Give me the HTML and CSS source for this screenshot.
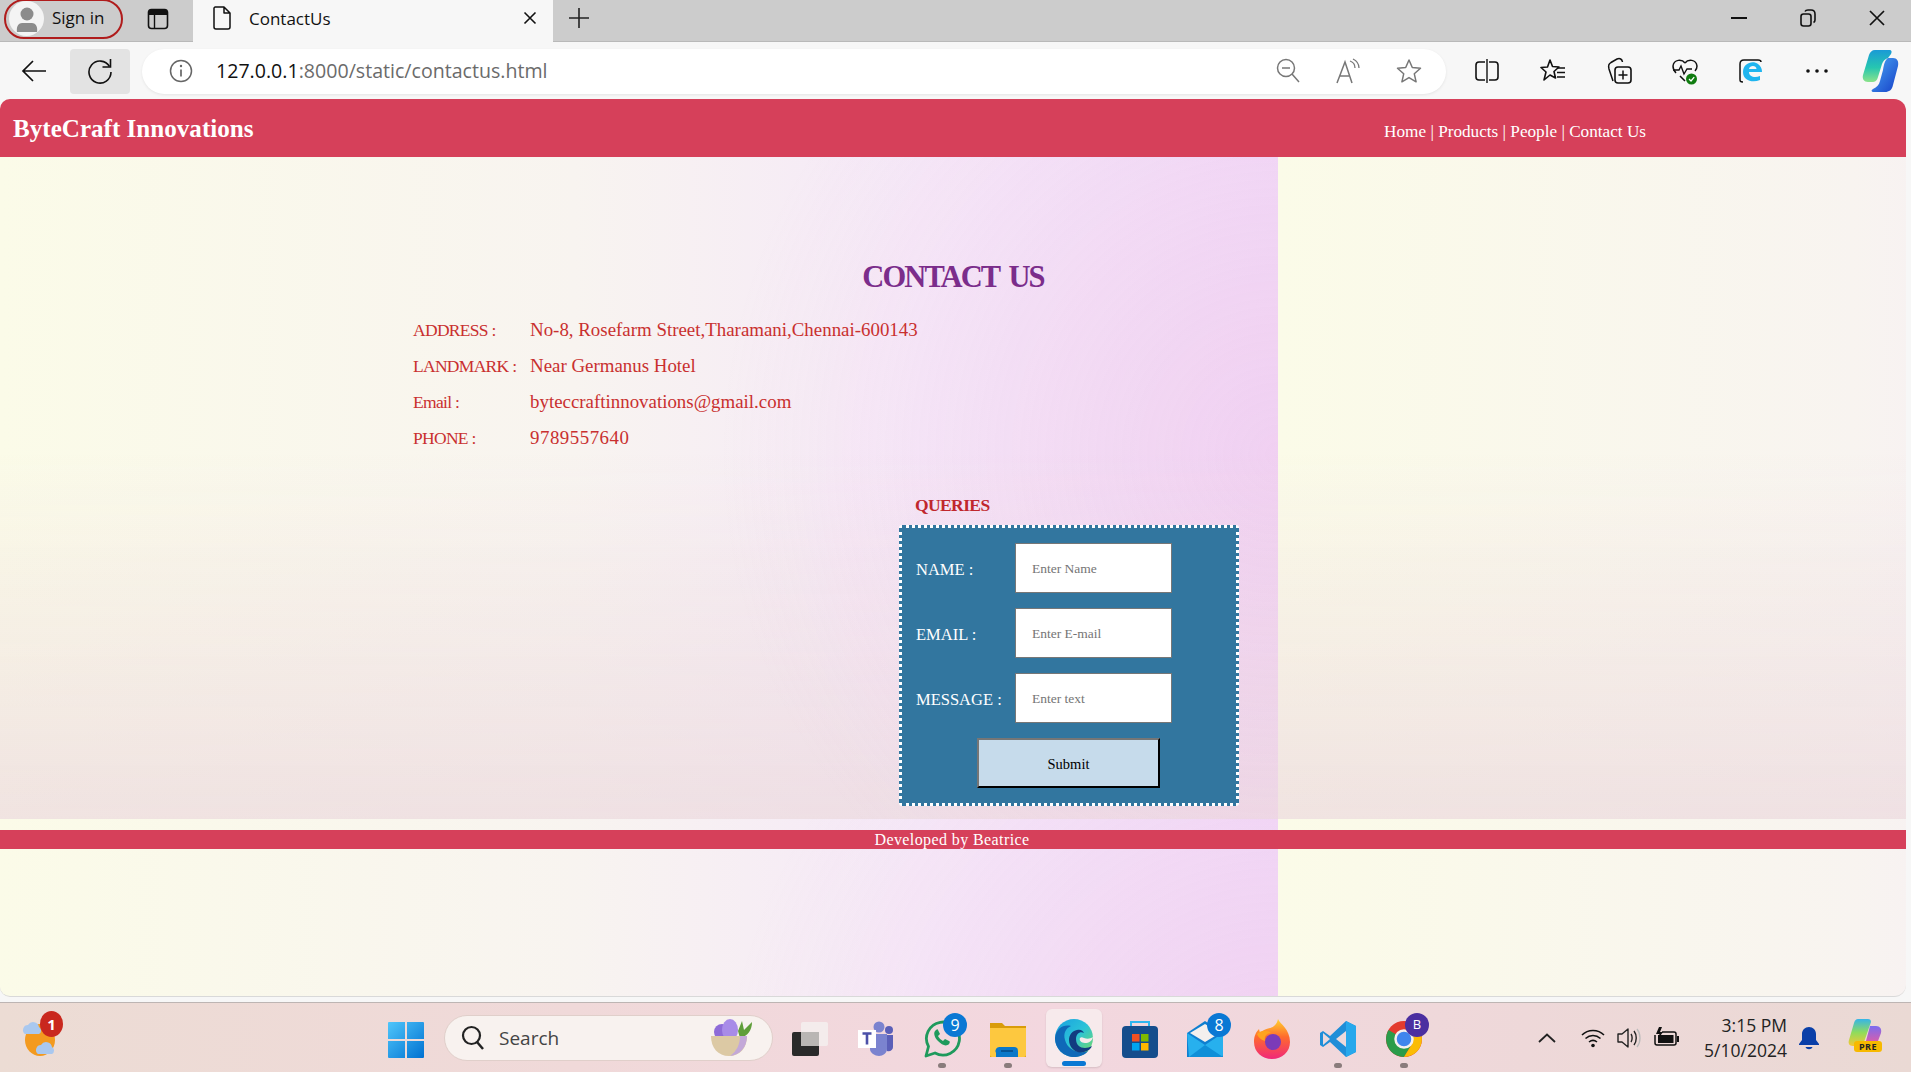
FILE: index.html
```html
<!DOCTYPE html>
<html lang="en">
<head>
<meta charset="utf-8">
<title>ContactUs</title>
<link rel="stylesheet" href="styles.css">
</head>
<body>
<div class="window">
  <div class="tabstrip">
    <div class="signin">
      <span class="avatar"><svg width="26" height="28" viewBox="0 0 26 28"><circle cx="13" cy="9" r="6.5" fill="#8c8c8c"/><path d="M3 27c-1-6 2-9 5-9h10c3 0 6 3 5 9z" fill="#8c8c8c"/></svg></span>
      <span class="signin-text">Sign in</span>
    </div>
    <div class="tabs-icon"><svg width="22" height="22" viewBox="0 0 22 22"><rect x="1.5" y="1.5" width="19" height="19" rx="3" fill="none" stroke="#111" stroke-width="1.6"/><path d="M2 2h18v5H2z" fill="#111"/><path d="M7.5 7v13" stroke="#111" stroke-width="1.4"/></svg></div>
    <div class="tab">
      <svg class="doc" width="18" height="24" viewBox="0 0 18 24"><path d="M2 1h9l6 6v14a2 2 0 0 1-2 2H3a2 2 0 0 1-2-2V2zM11 1v6h6" fill="none" stroke="#111" stroke-width="1.5" stroke-linejoin="round"/></svg>
      <span class="tab-title">ContactUs</span>
      <svg width="14" height="14" viewBox="0 0 14 14"><path d="M1.5 1.5l11 11M12.5 1.5l-11 11" stroke="#111" stroke-width="1.6"/></svg>
    </div>
    <div class="newtab"><svg width="22" height="22" viewBox="0 0 22 22"><path d="M11 1v20M1 11h20" stroke="#222" stroke-width="1.6"/></svg></div>
    <div class="winctl">
      <span><svg width="18" height="4" viewBox="0 0 18 4"><path d="M1 2h16" stroke="#111" stroke-width="2"/></svg></span>
      <span><svg width="16" height="18" viewBox="0 0 16 18"><rect x="1" y="5" width="10" height="12" rx="2.5" fill="none" stroke="#111" stroke-width="1.6"/><path d="M5 2.5C5.500 1.500 6.500 1 8 1h3c2.500 0 4 1.500 4 4v6c0 1-.5 2-1.500 2.500" fill="none" stroke="#111" stroke-width="1.6"/></svg></span>
      <span><svg width="16" height="16" viewBox="0 0 16 16"><path d="M1 1l14 14M15 1L1 15" stroke="#111" stroke-width="1.7"/></svg></span>
    </div>
  </div>

  <div class="toolbar">
    <div class="nav-btn"><svg width="26" height="24" viewBox="0 0 26 24"><path d="M25 12H2M12 2L2 12l10 10" fill="none" stroke="#111" stroke-width="1.7"/></svg></div>
    <div class="nav-btn nav-btn-active"><svg width="26" height="28" viewBox="0 0 26 28"><path d="M22.500 9.500A11 11 0 1 0 24 15" fill="none" stroke="#111" stroke-width="1.6"/><path d="M23.500 2v8h-8" fill="none" stroke="#111" stroke-width="1.6"/></svg></div>
    <div class="addressbar">
      <svg width="24" height="24" viewBox="0 0 24 24"><circle cx="12" cy="12" r="10.500" fill="none" stroke="#666" stroke-width="1.5"/><path d="M12 10.500v7" stroke="#666" stroke-width="1.700"/><circle cx="12" cy="7" r="1.200" fill="#666"/></svg>
      <div class="url"><span class="host">127.0.0.1</span>:8000/static/contactus.html</div>
      <div class="addr-tools">
        <svg width="24" height="26" viewBox="0 0 24 26"><circle cx="10" cy="10" r="8.500" fill="none" stroke="#777" stroke-width="1.500"/><path d="M6 10h8M16 16l7 8" stroke="#777" stroke-width="1.500"/></svg>
        <svg width="26" height="26" viewBox="0 0 26 26"><path d="M2 25L10 4l7 21M5 18h10" fill="none" stroke="#777" stroke-width="1.500"/><path d="M15 3c3 1 5 4 5 7M18 1c4 2 6 5 6 9" fill="none" stroke="#777" stroke-width="1.300"/></svg>
        <svg width="26" height="26" viewBox="0 0 26 26"><path d="M13 2l3.300 7.500 8.200.8-6.200 5.500 1.800 8L13 19.600 5.900 23.800l1.800-8L1.500 10.300l8.200-.8z" fill="none" stroke="#777" stroke-width="1.500" stroke-linejoin="round"/></svg>
      </div>
    </div>
    <div class="tools">
      <span><svg width="24" height="26" viewBox="0 0 24 26"><rect x="1" y="4" width="22" height="18" rx="3" fill="none" stroke="#111" stroke-width="1.600"/><path d="M12 1v24" stroke="#f7f7f7" stroke-width="4"/><path d="M12 1v24" stroke="#111" stroke-width="1.400"/></svg></span>
      <span><svg width="26" height="26" viewBox="0 0 26 26"><path d="M10 2l2.500 6.500 6.500.5-5 4.500 1.500 6.500L10 17l-6 5 2-8-5-4.500L7.500 9z" fill="none" stroke="#111" stroke-width="1.600" stroke-linejoin="round"/><path d="M17 10h8M17 14.500h8M17 19h8" stroke="#111" stroke-width="1.500"/></svg></span>
      <span><svg width="26" height="28" viewBox="0 0 26 28"><path d="M7 24L3 12C2 8 3 7 5 5.500L11 2c3-1 5 0 5.500 3" fill="none" stroke="#111" stroke-width="1.500"/><rect x="9" y="10" width="16" height="16" rx="3" fill="#f7f7f7" stroke="#111" stroke-width="1.600"/><path d="M17 13.500v9M12.500 18h9" stroke="#111" stroke-width="1.500"/></svg></span>
      <span><svg width="26" height="28" viewBox="0 0 26 28"><path d="M13 6c-3-4-11-4-12 3 0 3 1 5 3 7M13 6c3-4 11-4 12 3 0 2-1 4-2 5M8 19l5 5" fill="none" stroke="#111" stroke-width="1.500"/><path d="M1 13h6l2-4 3 8 3-5h5" fill="none" stroke="#111" stroke-width="1.400"/><circle cx="19.500" cy="22" r="5.500" fill="#107c10"/><path d="M17 22l2 2 3.200-3.800" fill="none" stroke="#fff" stroke-width="1.300"/></svg></span>
      <span><svg width="26" height="28" viewBox="0 0 26 28"><path d="M5 25c-3 0-3-1-3-3V7c0-3 1-4 4-4h14c2 0 3 1 3 2" fill="none" stroke="#111" stroke-width="1.500"/><path d="M24 15H11c0 5 6 6 11 4v4c-7 3-17 1-17-8 0-9 10-12 15-8 3 2 4 5 4 8zM18.500 12c0-4-7-4-7.500 0z" fill="#1fb5ef" fill-rule="evenodd"/></svg></span>
      <span><svg width="24" height="6" viewBox="0 0 24 6"><circle cx="3" cy="3" r="1.800" fill="#111"/><circle cx="12" cy="3" r="1.800" fill="#111"/><circle cx="21" cy="3" r="1.800" fill="#111"/></svg></span>
      <span><svg width="37" height="43" viewBox="0 0 37 43"><defs><linearGradient id="cpa" x1="0" y1="0" x2="0" y2="1"><stop offset="0" stop-color="#1a9ad6"/><stop offset=".55" stop-color="#26c6b0"/><stop offset="1" stop-color="#8be38a"/></linearGradient><linearGradient id="cpb" x1="0" y1="0" x2="1" y2="1"><stop offset="0" stop-color="#4aa8f5"/><stop offset="1" stop-color="#1640c8"/></linearGradient></defs><path d="M13 1h14c3 0 3 2 2 4l-3 4c-3 1-5 3-6 6l-4 13c-1 4-3 5-6 5H6c-4 0-6-3-5-7L7 6c1-3 3-5 6-5z" fill="url(#cpa)"/><path d="M26 9h5c4 0 6 3 5 8l-5 19c-1 5-4 7-8 7H12c-3 0-3-2-1-3 4-2 6-4 7-8l3-11c1-6 2-10 5-12z" fill="url(#cpb)"/></svg></span>
    </div>
  </div>

  <div class="page">
    <header class="site-header">
      <div class="brand">ByteCraft Innovations</div>
      <nav class="site-nav">Home | Products | People | Contact Us</nav>
    </header>
    <main class="main">
      <h1 class="title">CONTACT US</h1>
      <table class="info">
        <tr><td class="info-key">ADDRESS :</td><td>No-8, Rosefarm Street,Tharamani,Chennai-600143</td></tr>
        <tr><td class="info-key">LANDMARK :</td><td>Near Germanus Hotel</td></tr>
        <tr><td class="info-key">Email :</td><td>byteccraftinnovations@gmail.com</td></tr>
        <tr><td class="info-key">PHONE :</td><td class="info-digits">9789557640</td></tr>
      </table>
      <section class="queries">
        <h2 class="queries-title">QUERIES</h2>
        <form class="query-form">
          <div class="field"><label class="field-label">NAME :</label><input class="field-input" placeholder="Enter Name"></div>
          <div class="field"><label class="field-label">EMAIL :</label><input class="field-input" placeholder="Enter E-mail"></div>
          <div class="field"><label class="field-label">MESSAGE :</label><input class="field-input" placeholder="Enter text"></div>
          <button class="submit" type="button">Submit</button>
        </form>
      </section>
    </main>
    <footer class="site-footer">Developed by Beatrice</footer>
  </div>

  <div class="taskbar">
    <div class="weather">
      <svg width="44" height="44" viewBox="0 0 44 44"><ellipse cx="18" cy="26" rx="15" ry="16" fill="#f39a1f"/><path d="M3 20a5 5 0 0 1 3-9 6 6 0 0 1 11 2 4 4 0 0 1 0 7z" fill="#a9c8ef"/><path d="M16 40a5 5 0 0 1 3-9 6 6 0 0 1 11 2 4 4 0 0 1 0 7z" fill="#a9c8ef"/></svg>
      <span class="badge badge-red">1</span>
    </div>
    <div class="task-center">
      <div class="start"><svg width="36" height="36" viewBox="0 0 36 36"><defs><linearGradient id="win" x1="0" y1="0" x2="1" y2="1"><stop offset="0" stop-color="#4fc6fb"/><stop offset="1" stop-color="#0071d1"/></linearGradient></defs><path d="M0 1a1 1 0 0 1 1-1h16v17H0zM19 0h16a1 1 0 0 1 1 1v16H19zM0 19h17v17H1a1 1 0 0 1-1-1zM19 19h17v16a1 1 0 0 1-1 1H19z" fill="url(#win)"/></svg></div>
      <div class="search">
        <svg width="24" height="26" viewBox="0 0 24 26"><circle cx="10.500" cy="10.500" r="8.500" fill="none" stroke="#222" stroke-width="2.200"/><path d="M16 17l6 7" stroke="#222" stroke-width="2.500"/></svg>
        <span class="search-text">Search</span>
        <svg class="bowl" width="46" height="38" viewBox="0 0 46 38"><path d="M30 12l4-10 2 9 8-8c0 8-4 14-12 16z" fill="#5f9e3a"/><ellipse cx="14" cy="13" rx="8" ry="8" fill="#8e6bd8"/><ellipse cx="22" cy="11" rx="8" ry="11" fill="#a88be8"/><path d="M3 17h36c0 12-7 20-18 20S3 29 3 17z" fill="#dcc9a4"/><path d="M22 37c10-1 17-9 17-20h-7c0 8-3 15-10 20z" fill="#c3a8d8"/></svg>
      </div>
      <div class="apps">
        <div class="app"><svg width="36" height="36" viewBox="0 0 36 36"><rect x="0" y="11" width="27" height="24" rx="2" fill="#2a2a2a"/><rect x="9" y="1" width="27" height="24" rx="2" fill="#f4f0ee" opacity=".85"/><rect x="9" y="11" width="18" height="14" fill="#b9b6b4"/></svg></div>
        <div class="app"><svg width="36" height="36" viewBox="0 0 36 36"><circle cx="21" cy="6" r="5.500" fill="#7b83cf"/><circle cx="31" cy="9" r="4" fill="#5b5fb8"/><path d="M26 14h9v12c0 3-3 5-6 4z" fill="#5b5fb8"/><path d="M12 13h17v15c0 4-4 7-8 7s-9-3-9-7z" fill="#7b83cf"/><rect x="0" y="9" width="18" height="18" fill="#fff"/><path d="M4.500 12.500h9M9 12.500v11" stroke="#4b50a8" stroke-width="2.600"/></svg></div>
        <div class="app app-open"><svg width="38" height="38" viewBox="0 0 38 38"><path d="M3 36l2.500-9.500A16.500 16.500 0 1 1 12 33z" fill="none" stroke="#1f9a5c" stroke-width="2.800" stroke-linejoin="round"/><path d="M13 10c-3 2-2 7 2 11s8 6 11 3c1-1 1-3 0-3l-4-2-2 2c-2-1-4-3-5-5l2-2-2-4c0-1-1-1-2 0z" fill="#1f9a5c"/></svg><span class="badge badge-blue">9</span></div>
        <div class="app app-open"><svg width="36" height="36" viewBox="0 0 36 36"><path d="M0 2h12l3 3h21v31H0z" fill="#d99c0a"/><path d="M0 7h36v27a2 2 0 0 1-2 2H2a2 2 0 0 1-2-2z" fill="#fdc83f"/><path d="M6 32a4 4 0 0 1 4-6h14a4 4 0 0 1 4 4v6H6z" fill="#0a78c9"/><path d="M11 30h12" stroke="#054a85" stroke-width="1.500"/></svg></div>
        <div class="app app-active"><svg width="38" height="38" viewBox="0 0 38 38"><defs><linearGradient id="edg" x1="0" y1="0" x2="1" y2="1"><stop offset="0" stop-color="#1aa0e0"/><stop offset=".5" stop-color="#2bc3d8"/><stop offset="1" stop-color="#7fdc5a"/></linearGradient></defs><circle cx="19" cy="19" r="19" fill="url(#edg)"/><path d="M0 19C1 9 9 5 16 7c-5 2-8 7-6 14 2 8 10 13 20 12 1 0 2-1 3-1-3 4-9 6-14 6C9 38 0 30 0 19z" fill="#0f69b8"/><path d="M29 33c-8 2-15-4-15-12 0-5 3-9 8-10 4-1 6 1 7 3-4-2-8 1-8 6 0 6 4 9 9 9 2 0 5-1 7-2-1 3-4 5-8 6z" fill="#123c80"/><path d="M38 18c-1 4-4 6-8 6s-6-3-5-5c1-1 2-1 4 0 3 1 6 1 9-1z" fill="#f7eaec"/></svg></div>
        <div class="app"><svg width="36" height="38" viewBox="0 0 36 38"><path d="M9 8V2h18v6" fill="none" stroke="#2fb5ef" stroke-width="2"/><rect x="0" y="6" width="36" height="32" rx="4" fill="#154d8c"/><rect x="10" y="14" width="7.500" height="7.500" fill="#f25022"/><rect x="19" y="14" width="7.500" height="7.500" fill="#7fba00"/><rect x="10" y="23" width="7.500" height="7.500" fill="#00a4ef"/><rect x="19" y="23" width="7.500" height="7.500" fill="#ffb900"/></svg></div>
        <div class="app"><svg width="38" height="36" viewBox="0 0 38 36"><path d="M0 12L18 0l18 12v24H0z" fill="#0f7fd0"/><path d="M3 12L18 3l15 9-15 9z" fill="#f4f0ee"/><path d="M0 12l18 12 18-12v22a2 2 0 0 1-2 2H2z" fill="#27b0ee"/><path d="M2 36l16-12 18 12z" fill="#0f8fd8"/></svg><span class="badge badge-blue">8</span></div>
        <div class="app"><svg width="36" height="40" viewBox="0 0 36 40"><defs><linearGradient id="ffx" x1="0" y1="0" x2="0" y2="1"><stop offset="0" stop-color="#ffd42e"/><stop offset=".45" stop-color="#ff6a2d"/><stop offset="1" stop-color="#f0287a"/></linearGradient></defs><path d="M24 0c2 5 12 10 12 23 0 10-8 17-18 17S0 33 0 23c0-6 2-10 5-13l1 4c3-3 6-4 10-5 4-1 7-4 8-9z" fill="url(#ffx)"/><circle cx="19" cy="23" r="8" fill="#7b3bb8"/><path d="M3 15c4-4 11-4 14-1-4 0-7 3-6 8-4-1-7-4-8-7z" fill="#ffa31f"/></svg></div>
        <div class="app app-open"><svg width="36" height="36" viewBox="0 0 36 36"><path d="M26 0l10 5v26l-10 5-16-15-7 5-3-2v-12l3-2 7 5z" fill="#1f8ed8"/><path d="M26 0l10 5v26l-10 5z" fill="#27a8ec"/><path d="M26 10l-10 8 10 8z" fill="#ecd9dc"/><path d="M3 12l7 6-7 6z" fill="#ecd9dc"/></svg></div>
        <div class="app app-open"><svg width="36" height="36" viewBox="0 0 36 36"><circle cx="18" cy="18" r="18" fill="#e33b2e"/><path d="M18 18L2.500 9A18 18 0 0 0 18 36l8-13z" fill="#2a9c4a"/><path d="M18 9h15.500A18 18 0 0 1 18 36l8-13z" fill="#fbbc05"/><circle cx="18" cy="18" r="8.500" fill="#3f86ee" stroke="#f5f0ee" stroke-width="2.500"/></svg><span class="badge badge-purple">B</span></div>
      </div>
    </div>
    <div class="tray">
      <svg class="tray-chevron" width="18" height="10" viewBox="0 0 18 10"><path d="M1 9l8-7.500L17 9" fill="none" stroke="#222" stroke-width="1.800"/></svg>
      <svg width="24" height="20" viewBox="0 0 24 20"><path d="M1 7c6-6 16-6 22 0M4.500 10.500c4.500-4 10.500-4 15 0M8 14c2.500-2 5.500-2 8 0" fill="none" stroke="#111" stroke-width="1.600"/><circle cx="12" cy="17.500" r="1.800" fill="#111"/></svg>
      <svg width="24" height="22" viewBox="0 0 24 22"><path d="M1 7h4l6-5v18l-6-5H1z" fill="none" stroke="#222" stroke-width="1.400" stroke-linejoin="round"/><path d="M14 7c1.500 2 1.500 6 0 8M17 4c3 4 3 10 0 14" fill="none" stroke="#222" stroke-width="1.400"/><path d="M20 2c4 5 4 13 0 18" fill="none" stroke="#bbb" stroke-width="1.300"/></svg>
      <svg width="26" height="22" viewBox="0 0 26 22"><path d="M2 8v8a2 2 0 0 0 2 2h17a2 2 0 0 0 2-2V7a2 2 0 0 0-2-2H9" fill="none" stroke="#111" stroke-width="1.500"/><rect x="5" y="8" width="15.500" height="8" fill="#111"/><rect x="24" y="9" width="2" height="6" fill="#111"/><path d="M6 0L3 7h3.500L5 12l5-7H7l2-5z" fill="#111"/></svg>
      <div class="clock"><div>3:15 PM</div><div>5/10/2024</div></div>
      <svg class="bell" width="20" height="24" viewBox="0 0 20 24"><path d="M10 1c-4 0-7 3-7 7v6l-3 4v1h20v-1l-3-4V8c0-4-3-7-7-7z" fill="#0a3fa8"/><path d="M6.500 21h7c-1 3-6 3-7 0z" fill="#0a3fa8"/></svg>
      <div class="copilot-pre">
        <svg width="34" height="28" viewBox="0 0 34 28"><defs><linearGradient id="cpp" x1="0" y1="0" x2="0" y2="1"><stop offset="0" stop-color="#36b5e8"/><stop offset=".5" stop-color="#8fdc5c"/><stop offset="1" stop-color="#f7c733"/></linearGradient><linearGradient id="cpq" x1="0" y1="0" x2="0" y2="1"><stop offset="0" stop-color="#7a6cf0"/><stop offset="1" stop-color="#f05a9a"/></linearGradient></defs><path d="M10 0h10c2 0 3 1 3 3l-7 20c-1 3-3 4-5 4H5c-4 0-5-3-4-6L6 4c1-3 2-4 4-4z" fill="url(#cpp)"/><path d="M22 7h6c4 0 6 3 5 7l-3 8c-1 3-3 5-6 5H13c3-1 4-3 5-5z" fill="url(#cpq)"/></svg>
        <span class="pre-tag">PRE</span>
      </div>
    </div>
  </div>
</div>
</body>
</html>
```
FILE: styles.css
```css
* { box-sizing: border-box; }
html, body { margin: 0; height: 100%; overflow: hidden; }
body { font-family: "Open Sans", "Noto Sans", sans-serif; color: #111; }
.window { display: flex; flex-direction: column; height: 1072px; background: #f7f7f7; }

/* tab strip */
.tabstrip { display: flex; align-items: center; height: 42px; background: #cccccc; border-bottom: 1px solid #b9b9b9; padding-left: 4px; flex: none; }
.signin { display: flex; align-items: center; gap: 8px; width: 119px; height: 40px; margin-top: -4px; padding-left: 3px; border: 2px solid #b01c1c; border-radius: 20px; font-size: 17px; }
.signin-text { padding-bottom: 2px; }
.avatar { display: flex; align-items: center; justify-content: center; width: 35px; height: 35px; border-radius: 50%; background: #f4f4f4; flex: none; overflow: hidden; }
.tabs-icon { display: flex; justify-content: center; width: 70px; margin-top: -3px; }
.tab { display: flex; align-items: center; width: 360px; height: 42px; padding: 0 16px 5px 20px; background: #f7f7f7; }
.tab-title { flex: 1; margin-left: 18px; font-size: 17px; }
.newtab { display: flex; justify-content: center; width: 52px; margin-top: -5px; }
.winctl { display: flex; margin-left: auto; }
.winctl span { display: flex; align-items: center; justify-content: center; width: 69px; height: 36px; margin-top: -6px; }

/* toolbar */
.toolbar { display: flex; align-items: center; height: 57px; padding: 0 0 0 4px; flex: none; }
.nav-btn { display: flex; align-items: center; justify-content: center; width: 60px; height: 45px; margin-top: 1px; border-radius: 4px; }
.nav-btn-active { background: #e3e3e3; margin-left: 6px; }
.addressbar { display: flex; align-items: center; width: 1304px; height: 45px; margin: 1px 0 0 12px; padding: 0 24px 0 27px; background: #fff; border-radius: 23px; box-shadow: 0 1px 3px rgba(0,0,0,.08); }
.url { flex: 1; margin: -2px 0 0 23px; font-size: 19.600px; color: #6b6b6b; white-space: nowrap; }
.host { color: #111; }
.addr-tools { display: flex; align-items: center; gap: 35px; }
.tools { display: flex; align-items: center; padding-left: 8px; }
.tools span { display: flex; align-items: center; justify-content: center; width: 66px; }
.tools span:last-child { width: 60px; }

/* page */
.page { height: 898px; margin-right: 5px; border-radius: 10px 12px 12px 10px; overflow: hidden; flex: none; border-bottom: 1px solid #d9d9d9;
  background-color: #fbf7ef;
  background-image:
    radial-gradient(circle at 100% 45%, rgba(238,180,222,.26), rgba(238,180,222,0) 42%),
    linear-gradient(180deg, rgba(236,218,222,0) 45%, rgba(236,218,222,.72) 100%),
    linear-gradient(90deg, #fbfbe8 0%, #f8f4f0 45%, #f5e8f8 72%, #f1daf8 100%);
  background-size: 1278px 663px;
  background-position: 0 57px;
}
.site-header { display: flex; justify-content: space-between; height: 58px; background: #d6405a; color: #fff; font-family: "Liberation Serif", serif; }
.brand { padding: 16px 0 0 13px; font-size: 25.100px; font-weight: 700; }
.site-nav { padding: 23px 260px 0 0; font-size: 17.200px; }

.main { height: 663px; padding-top: 100px; font-family: "Liberation Serif", serif; color: #c9302f; }
.title { margin: 0; text-align: center; font-size: 30.500px; line-height: 40px; font-weight: 700; letter-spacing: -1.900px; word-spacing: 4px; color: #7b2d8b; }
.info { margin: 15px 0 0 410px; border-collapse: collapse; font-size: 18.900px; }
.info td { height: 36px; padding: 0 3px; white-space: nowrap; }
.info-key { width: 117px; font-size: 17.500px; letter-spacing: -.7px; }
.info-digits { letter-spacing: .5px; }

.queries { width: 340px; margin: 38px 0 0 899px; }
.queries-title { margin: 0 0 9px 16px; font-size: 17.500px; line-height: 22px; font-weight: 700; letter-spacing: -.6px; color: #c0272d; }
.query-form { height: 281px; padding: 15px 0 0 14px; background: #32769f; border: 3px dotted #fff; border-radius: 3px; color: #fff; }
.field { display: flex; align-items: center; height: 50px; margin-bottom: 15px; }
.field-label { width: 99px; padding-top: 3px; font-size: 16.500px; }
.field-input { width: 157px; height: 50px; padding: 2px 0 0 16px; background: #fff; border: 1px solid #777; font-family: "Liberation Serif", serif; font-size: 13.500px; }
.field-input::placeholder { color: #757575; opacity: 1; }
.submit { display: block; width: 183px; height: 50px; margin: 0 0 0 61px; padding-top: 3px; background: #c6dbeb; border: 2px outset #222; color: #000; font-family: "Liberation Serif", serif; font-size: 14.500px; }
.site-footer { height: 19px; margin-top: 10px; background: #d6405a; color: #fff; font-family: "Liberation Serif", serif; font-size: 16px; letter-spacing: .4px; line-height: 20px; text-align: center; padding-right: 2px; }

/* taskbar */
.taskbar { position: relative; display: flex; align-items: center; height: 70px; margin-top: 5px; flex: none; border-top: 1px solid #bdb5b3; background: linear-gradient(90deg, #ecdcd4 0%, #f0d9d9 30%, #f3d7df 55%, #ead9d4 100%); }
.weather { position: relative; display: flex; margin: -3px 0 0 22px; width: 44px; }
.task-center { display: flex; align-items: center; margin-left: 322px; }
.start { display: flex; margin-top: 4px; }
.search { display: flex; align-items: center; width: 329px; height: 46px; margin-left: 20px; padding: 0 18px 0 16px; background: #f8f2ef; border: 1px solid #e0cfca; border-radius: 23px; }
.search-text { flex: 1; margin-left: 14px; font-size: 19px; color: #444; }
.apps { display: flex; align-items: center; margin-left: 4px; }
.app { position: relative; display: flex; align-items: center; justify-content: center; width: 66px; height: 58px; margin-top: 2px; }
.app-active { width: 56px; margin: 2px 5px; background: #f7eaec; border-radius: 6px; box-shadow: 0 1px 2px rgba(0,0,0,.12); }
.app-active::after { content: ""; position: absolute; left: 16px; bottom: 1px; width: 24px; height: 5px; border-radius: 3px; background: #0a78d4; }
.app-open::after { content: ""; position: absolute; left: 29px; bottom: 0; width: 8px; height: 5px; border-radius: 3px; background: #8a7c7c; }
.badge { position: absolute; display: flex; align-items: center; justify-content: center; width: 24px; height: 24px; border-radius: 50%; color: #fff; font-size: 16px; line-height: 1; }
.badge-blue { top: 3px; right: 8px; background: #0a78d4; }
.badge-purple { top: 3px; right: 8px; background: #4b2fa0; font-size: 13px; }
.badge-red { top: -3px; left: 18px; width: 23px; height: 26px; background: #c9281e; font-size: 15px; font-weight: 700; }
.tray { display: flex; align-items: center; margin-left: 101px; gap: 12px; }
.tray-chevron { margin-right: 13px; }
.clock { margin-left: 2px; width: 94px; text-align: right; font-size: 17.500px; line-height: 25px; color: #222; white-space: nowrap; }
.bell { margin-left: 0; }
.copilot-pre { position: relative; display: flex; justify-content: center; width: 40px; height: 38px; margin-left: 14px; }
.pre-tag { position: absolute; left: 9px; top: 22px; width: 28px; height: 11px; border-radius: 3px; background: #f7b900; color: #222; font-size: 9px; font-weight: 700; line-height: 11px; text-align: center; letter-spacing: .5px; }
```
